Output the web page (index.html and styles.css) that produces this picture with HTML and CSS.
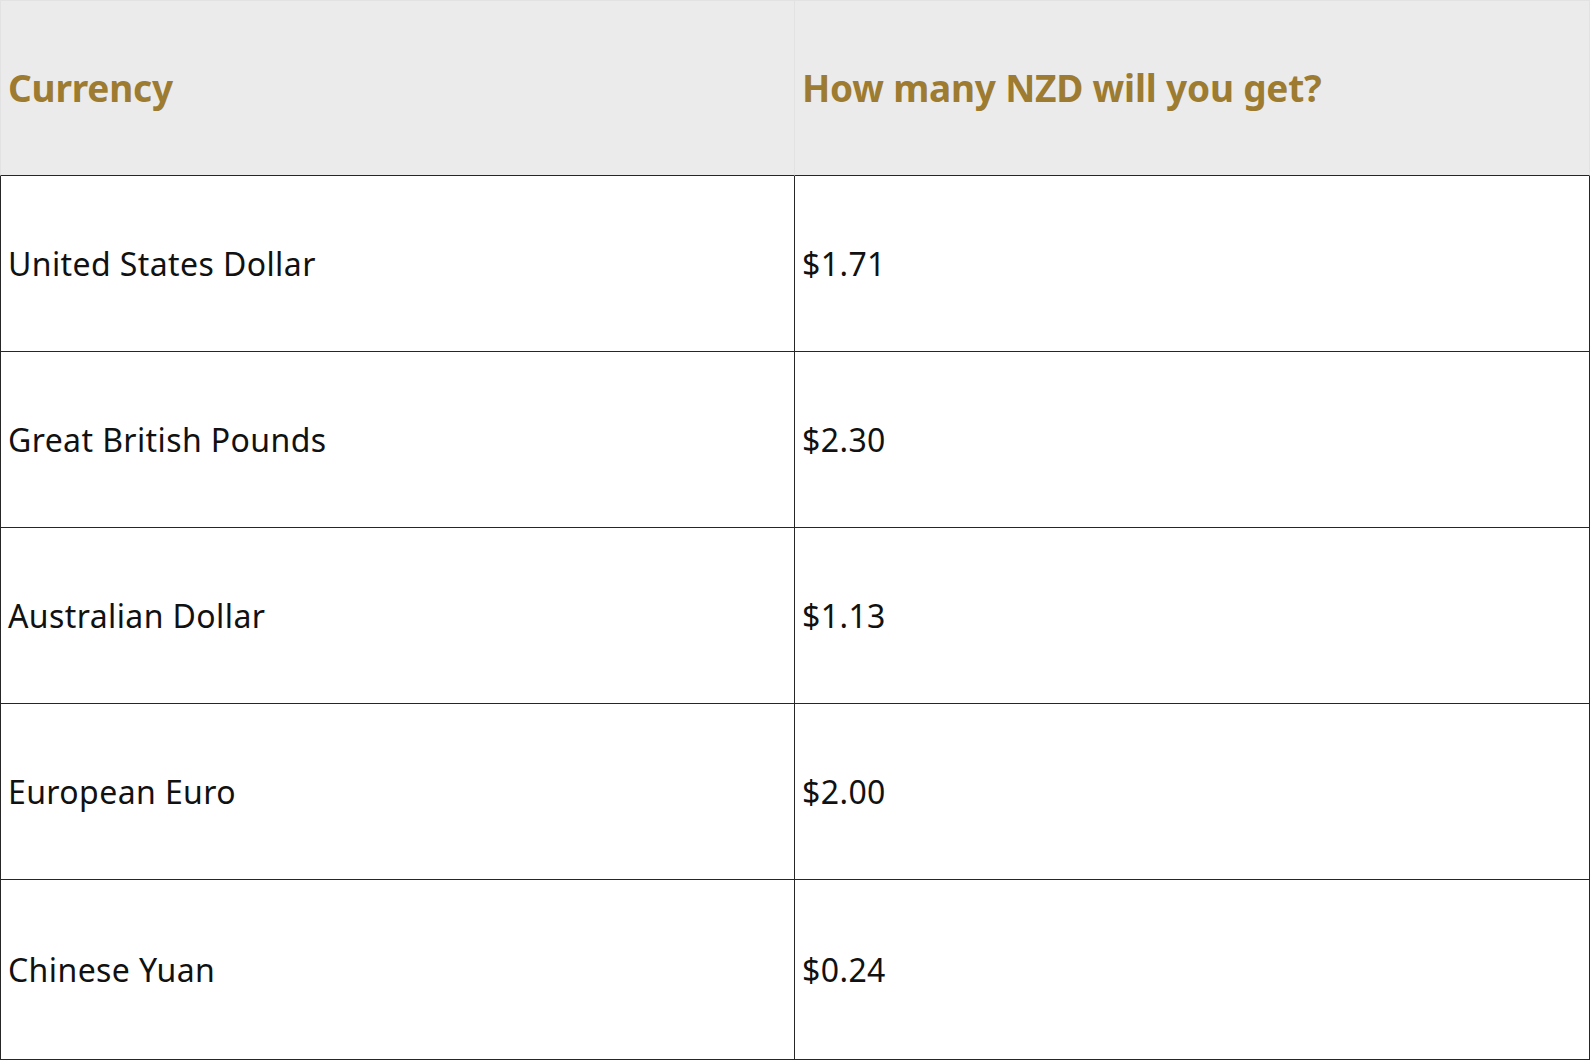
FILE: index.html
```html
<!DOCTYPE html>
<html lang="en">
<head>
<meta charset="utf-8">
<title>NZD exchange</title>
<link rel="stylesheet" href="styles.css">
</head>
<body>
<div class="table">
  <div class="cell head first">Currency</div>
  <div class="cell head">How many NZD will you get?</div>

  <div class="cell first">United States Dollar</div>
  <div class="cell">$1.71</div>

  <div class="cell first">Great British Pounds</div>
  <div class="cell">$2.30</div>

  <div class="cell first">Australian Dollar</div>
  <div class="cell">$1.13</div>

  <div class="cell first">European Euro</div>
  <div class="cell">$2.00</div>

  <div class="cell first">Chinese Yuan</div>
  <div class="cell">$0.24</div>
</div>
</body>
</html>
```

FILE: styles.css
```css
html, body {
  margin: 0;
  padding: 0;
  background: #ffffff;
}

.table {
  display: grid;
  grid-template-columns: 795px 795px;
  grid-template-rows: 176px repeat(4, 176px) 180px;
  width: 1590px;
  height: 1060px;
  font-family: "Noto Sans", "Open Sans", sans-serif;
}

.cell {
  box-sizing: border-box;
  display: flex;
  align-items: center;
  padding-left: 7px;
  font-size: 32px;
  letter-spacing: 0.4px;
  color: #111111;
  border-right: 1px solid #262626;
  border-bottom: 1px solid #262626;
}

.cell.first {
  border-left: 1px solid #262626;
}

.cell.head {
  background: #ebebeb;
  color: #9d7b30;
  font-weight: 700;
  font-size: 37px;
  letter-spacing: -0.2px;
  padding-bottom: 2px;
  border-top: 1px solid #e2e2e2;
  border-right: 1px solid #e2e2e2;
  border-bottom: 1px solid #262626;
}

.cell.head.first {
  border-left: 1px solid #e2e2e2;
}
```
